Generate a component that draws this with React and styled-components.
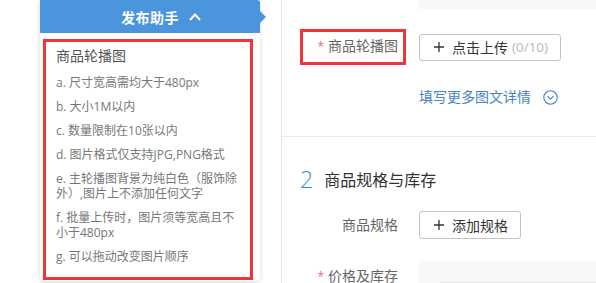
import React from 'react';
import styled, { createGlobalStyle } from 'styled-components';

const GlobalStyle = createGlobalStyle`
  html, body {
    margin: 0;
    padding: 0;
    background: #fff;
    overflow: hidden;
  }
  body {
    font-family: "Open Sans", "Noto Sans CJK SC", sans-serif;
    color: #333;
  }
`;

const Page = styled.div`
  display: flex;
  width: 596px;
  height: 283px;
  overflow: hidden;
`;

const Aside = styled.div`
  width: 281px;
  flex-shrink: 0;
  padding-left: 40px;
  box-sizing: border-box;
`;

const Helper = styled.div`
  width: 220px;
  height: 281px;
  background: #fff;
  border-radius: 0 0 4px 4px;
  box-shadow: 0 1px 4px rgba(0, 0, 0, 0.16);
  display: flex;
  flex-direction: column;
`;

const HelperHead = styled.div`
  position: relative;
  height: 33px;
  flex-shrink: 0;
  background: #4a95db;
  border-top-right-radius: 3px;
  display: flex;
  align-items: center;
  justify-content: center;
  gap: 10px;
  padding-left: 22px;
  color: #fff;
  font-size: 14px;
  font-weight: 700;
  letter-spacing: 0.5px;

  &::after {
    content: "";
    position: absolute;
    right: -6px;
    top: 11px;
    border-left: 6px solid #4a95db;
    border-top: 6px solid transparent;
    border-bottom: 6px solid transparent;
  }
`;

const HelperBody = styled.div`
  padding: 6px 7px 0 3px;
`;

const Tips = styled.div`
  height: 241px;
  box-sizing: border-box;
  border: 3px solid #f0343a;
  padding: 4px 6px 0 10px;
`;

const TipsTitle = styled.div`
  font-size: 14px;
  line-height: 20px;
  color: #555;
`;

const Tip = styled.p`
  margin: 9px 0 0;
  font-size: 12px;
  line-height: 15px;
  color: #777;
`;

const Main = styled.div`
  flex: 1;
  border-left: 1px solid #e8eaec;
`;

const TopStrip = styled.div`
  height: 9px;
  margin-left: 137px;
  background: #f7f7f7;
`;

const Section = styled.div`
  padding: ${p => p.$pad};
  border-bottom: ${p => (p.$divided ? '1px solid #e8eaec' : 'none')};
`;

const Row = styled.div`
  display: flex;
  align-items: ${p => (p.$top ? 'flex-start' : 'center')};
  margin-top: ${p => p.$mt || 0}px;
  gap: 13px;
`;

const LabelCell = styled.div`
  width: 124px;
  flex-shrink: 0;
  display: flex;
  justify-content: flex-end;
  padding-top: ${p => (p.$top ? 5 : 0)}px;
`;

const Label = styled.div`
  font-size: 14px;
  line-height: 20px;
  color: #666;
  padding-right: 8px;
  white-space: nowrap;
`;

const MarkedLabel = styled(Label)`
  border: 3px solid #f0343a;
  padding: 4px 5px 5px 14px;
`;

const Star = styled.span`
  color: #f06a5c;
  font-size: 12px;
  margin-right: 4px;
`;

const Button = styled.button`
  height: ${p => p.$h}px;
  box-sizing: border-box;
  display: inline-flex;
  align-items: center;
  gap: 8px;
  padding: 0 12px 0 14px;
  border: 1px solid #c3c3c3;
  border-radius: 3px;
  background: #fff;
  font-family: inherit;
  font-size: 14px;
  color: #333;
  cursor: pointer;
`;

const Count = styled.span`
  color: #b8b8b8;
  font-size: 13.5px;
  margin-left: -4px;
`;

const Link = styled.a`
  margin-left: 137px;
  display: inline-flex;
  align-items: center;
  gap: 12px;
  font-size: 14px;
  line-height: 20px;
  color: #4a82c3;
  cursor: pointer;
`;

const SectionTitle = styled.div`
  display: flex;
  align-items: center;
  gap: 11px;
  padding-left: 18px;
  height: 30px;
`;

const StepNo = styled.span`
  font-size: 23px;
  font-weight: 300;
  color: #2d8cf0;
`;

const StepName = styled.span`
  font-size: 16px;
  color: #333;
`;

const StockPanel = styled.div`
  flex: 1;
  height: 60px;
  background: #f7f7f7;
  padding: 21px 0 0 21px;
  box-sizing: border-box;
`;

const StockTable = styled.div`
  height: 40px;
  background: #fff;
  border: 1px solid #e6e6e6;
`;

const PlusIcon = () => (
  <svg width="10" height="10" viewBox="0 0 10 10">
    <path d="M5 0v10M0 5h10" stroke="#333" strokeWidth="1.3" />
  </svg>
);

const ChevronUp = () => (
  <svg width="12" height="8" viewBox="0 0 12 8">
    <path d="M1 7l5-5.5L11 7" stroke="#fff" strokeWidth="2" fill="none" />
  </svg>
);

const CircleDown = () => (
  <svg width="15" height="15" viewBox="0 0 15 15">
    <circle cx="7.5" cy="7.5" r="6.7" stroke="#4a82c3" strokeWidth="1.1" fill="none" />
    <path d="M4.6 6.2l2.9 2.9 2.9-2.9" stroke="#4a82c3" strokeWidth="1.1" fill="none" />
  </svg>
);

const tips = [
  'a. 尺寸宽高需均大于480px',
  'b. 大小1M以内',
  'c. 数量限制在10张以内',
  'd. 图片格式仅支持JPG,PNG格式',
  'e. 主轮播图背景为纯白色（服饰除外）,图片上不添加任何文字',
  'f. 批量上传时，图片须等宽高且不小于480px',
  'g. 可以拖动改变图片顺序',
];

export default function App() {
  return (
    <>
      <GlobalStyle />
      <Page>
        <Aside>
          <Helper>
            <HelperHead>
              发布助手
              <ChevronUp />
            </HelperHead>
            <HelperBody>
              <Tips>
                <TipsTitle>商品轮播图</TipsTitle>
                {tips.map(t => (
                  <Tip key={t}>{t}</Tip>
                ))}
              </Tips>
            </HelperBody>
          </Helper>
        </Aside>

        <Main>
          <TopStrip />
          <Section $pad="20px 0 29px" $divided>
            <Row>
              <LabelCell>
                <MarkedLabel><Star>*</Star>商品轮播图</MarkedLabel>
              </LabelCell>
              <Button $h={27}>
                <PlusIcon />
                点击上传
                <Count>(0/10)</Count>
              </Button>
            </Row>
            <Row $mt={22}>
              <Link>
                填写更多图文详情
                <CircleDown />
              </Link>
            </Row>
          </Section>

          <Section $pad="27px 0 0">
            <SectionTitle>
              <StepNo>2</StepNo>
              <StepName>商品规格与库存</StepName>
            </SectionTitle>
            <Row $mt={17}>
              <LabelCell>
                <Label>商品规格</Label>
              </LabelCell>
              <Button $h={28}>
                <PlusIcon />
                添加规格
              </Button>
            </Row>
            <Row $mt={22} $top>
              <LabelCell $top>
                <Label><Star>*</Star>价格及库存</Label>
              </LabelCell>
              <StockPanel>
                <StockTable />
              </StockPanel>
            </Row>
          </Section>
        </Main>
      </Page>
    </>
  );
}
